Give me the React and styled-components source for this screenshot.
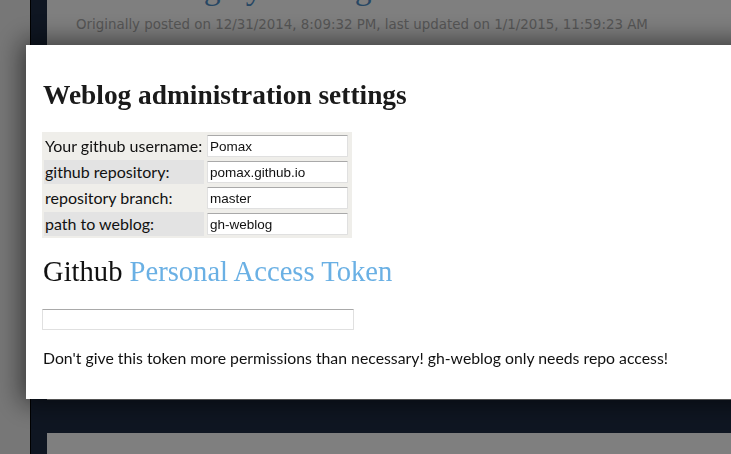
import React from "react";
import styled, { createGlobalStyle } from "styled-components";

const Global = createGlobalStyle`
  html, body { margin: 0; padding: 0; height: 100%; overflow: hidden; }
  body { background: #eeeeee; font-family: "Lato", "Liberation Sans", sans-serif; }
`;

const Page = styled.div`
  height: 454px;
  display: flex;
  padding-left: 30px;
  box-sizing: border-box;
  overflow: hidden;
`;

const Sidebar = styled.div`
  flex: 1;
  background: #1e2c44;
  border-left: 1px solid #000;
  padding-left: 16px;
  display: flex;
  flex-direction: column;
  gap: 33px;
`;

const Article = styled.div`
  background: #ffffff;
  padding: 0 0 0 15px;
  flex: ${(p) => (p.$h ? `0 0 ${p.$h}px` : "1 1 auto")};
  overflow: hidden;
`;

const PostTitle = styled.h1`
  margin: -29px 0 0;
  font-family: "Liberation Serif", serif;
  font-weight: normal;
  font-size: 33.6px;
  color: #4e8fc9;
  line-height: 34px;
  white-space: nowrap;
`;

const PostMeta = styled.div`
  font-family: "DejaVu Sans", sans-serif;
  font-size: 13.4px;
  line-height: 16px;
  color: #adadad;
  margin: 12px 0 0 14px;
  white-space: nowrap;
`;

const Backdrop = styled.div`
  position: fixed;
  inset: 0;
  background: rgba(0, 0, 0, 0.5);
`;

const Modal = styled.div`
  position: fixed;
  left: 26px;
  top: 45px;
  right: -20px;
  height: 354px;
  background: #fff;
  box-shadow: 0 0 24px 4px rgba(0, 0, 0, 0.55);
  padding: 34px 17px 0;
  box-sizing: border-box;
`;

const Heading = styled.h2`
  margin: 0 0 21px;
  font-family: "Liberation Serif", serif;
  font-weight: bold;
  font-size: 27.4px;
  line-height: 32px;
  color: #1a1a1a;
  white-space: nowrap;
`;

const SubHeading = styled.h3`
  margin: 18px 0 21px;
  font-family: "Liberation Serif", serif;
  font-weight: normal;
  font-size: 28.6px;
  line-height: 32px;
  color: #111;
  white-space: nowrap;
`;

const Accent = styled.span`
  color: #6ab0e4;
`;

const Table = styled.div`
  display: inline-grid;
  grid-template-columns: 160px 141px;
  grid-auto-rows: 24px;
  column-gap: 3px;
  row-gap: 2px;
  background: #efeeea;
  padding: 2px 4px 2px 2px;
  margin-left: -1px;
`;

const Label = styled.div`
  background: ${(p) => (p.$alt ? "#e3e3e3" : "#efeeea")};
  font-size: 16px;
  color: #111;
  line-height: 24px;
  padding-left: 1px;
  white-space: nowrap;
`;

const Input = styled.input`
  display: block;
  box-sizing: border-box;
  width: ${(p) => p.$w || 141}px;
  height: ${(p) => p.$h || 22}px;
  margin: ${(p) => (p.$block ? "0 0 0 -1px" : "1px 0 0")};
  border: 1px solid #e0e0e0;
  border-top-color: #a9a9a9;
  border-radius: 1px;
  background: #fff;
  font-family: "Liberation Sans", Arial, sans-serif;
  font-size: 13.5px;
  color: #111;
  padding: 0 2px;
  outline: none;
`;

const Note = styled.p`
  margin: 18px 0 0;
  font-size: 15.8px;
  line-height: 19px;
  color: #111;
  white-space: nowrap;
`;

const rows = [
  ["Your github username:", "Pomax"],
  ["github repository:", "pomax.github.io"],
  ["repository branch:", "master"],
  ["path to weblog:", "gh-weblog"],
];

export default function App() {
  return (
    <>
      <Global />
      <Page>
        <Sidebar>
          <Article $h={400}>
            <PostTitle>Refactoring by starting from scratch</PostTitle>
            <PostMeta>
              Originally posted on 12/31/2014, 8:09:32 PM, last updated on 1/1/2015, 11:59:23 AM
            </PostMeta>
          </Article>
          <Article />
        </Sidebar>
      </Page>
      <Backdrop />
      <Modal>
        <Heading>Weblog administration settings</Heading>
        <Table>
          {rows.map(([l, v], i) => (
            <React.Fragment key={l}>
              <Label $alt={i % 2 === 1}>{l}</Label>
              <Input defaultValue={v} />
            </React.Fragment>
          ))}
        </Table>
        <SubHeading>
          Github <Accent>Personal Access Token</Accent>
        </SubHeading>
        <Input $block $w={312} $h={21} />
        <Note>
          Don't give this token more permissions than necessary! gh-weblog only needs repo access!
        </Note>
      </Modal>
    </>
  );
}
